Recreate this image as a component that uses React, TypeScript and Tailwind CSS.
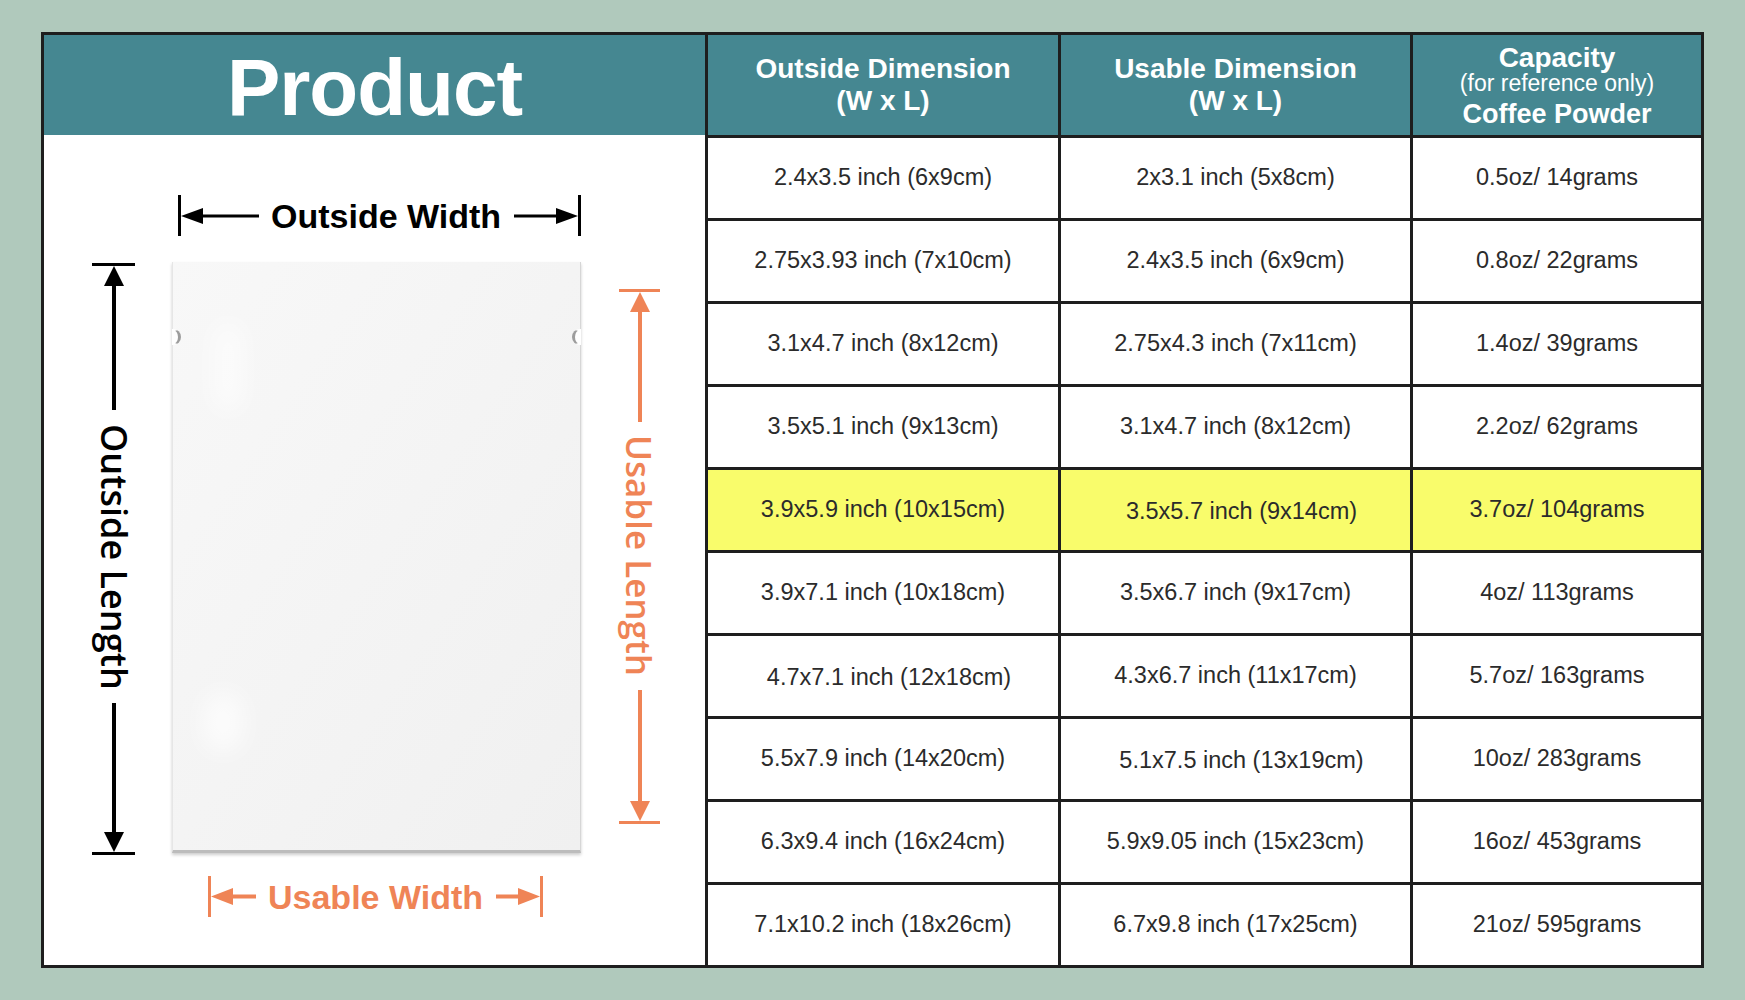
import React from 'react';

const ORANGE = '#ef8456';

type Row = { outside: string; usable: string; capacity: string; hl?: boolean; shift?: string };

const rows: Row[] = [
  { outside: '2.4x3.5 inch (6x9cm)', usable: '2x3.1 inch (5x8cm)', capacity: '0.5oz/ 14grams' },
  { outside: '2.75x3.93 inch (7x10cm)', usable: '2.4x3.5 inch (6x9cm)', capacity: '0.8oz/ 22grams' },
  { outside: '3.1x4.7 inch (8x12cm)', usable: '2.75x4.3 inch (7x11cm)', capacity: '1.4oz/ 39grams' },
  { outside: '3.5x5.1 inch (9x13cm)', usable: '3.1x4.7 inch (8x12cm)', capacity: '2.2oz/ 62grams' },
  { outside: '3.9x5.9 inch (10x15cm)', usable: '3.5x5.7 inch (9x14cm)', capacity: '3.7oz/ 104grams', hl: true, shift: 'usable' },
  { outside: '3.9x7.1 inch (10x18cm)', usable: '3.5x6.7 inch (9x17cm)', capacity: '4oz/ 113grams' },
  { outside: '4.7x7.1 inch (12x18cm)', usable: '4.3x6.7 inch (11x17cm)', capacity: '5.7oz/ 163grams', shift: 'outside' },
  { outside: '5.5x7.9 inch (14x20cm)', usable: '5.1x7.5 inch (13x19cm)', capacity: '10oz/ 283grams', shift: 'usable' },
  { outside: '6.3x9.4 inch (16x24cm)', usable: '5.9x9.05 inch (15x23cm)', capacity: '16oz/ 453grams' },
  { outside: '7.1x10.2 inch (18x26cm)', usable: '6.7x9.8 inch (17x25cm)', capacity: '21oz/ 595grams' },
];

// horizontal arrow, head on one end
function HArrow({ len, dir, color, thick = 3, head = 22, hh = 16 }: { len: number; dir: 'left' | 'right'; color: string; thick?: number; head?: number; hh?: number }) {
  const y = (hh - thick) / 2;
  return (
    <svg width={len} height={hh} className="shrink-0 block">
      {dir === 'left' ? (
        <>
          <polygon points={`0,${hh / 2} ${head},0 ${head},${hh}`} fill={color} />
          <rect x={head - 1} y={y} width={len - head + 1} height={thick} fill={color} />
        </>
      ) : (
        <>
          <rect x={0} y={y} width={len - head + 1} height={thick} fill={color} />
          <polygon points={`${len},${hh / 2} ${len - head},0 ${len - head},${hh}`} fill={color} />
        </>
      )}
    </svg>
  );
}

function VArrow({ len, dir, color, thick = 4, head = 20, hw = 20 }: { len: number; dir: 'up' | 'down'; color: string; thick?: number; head?: number; hw?: number }) {
  const x = (hw - thick) / 2;
  return (
    <svg width={hw} height={len} className="shrink-0 block">
      {dir === 'up' ? (
        <>
          <polygon points={`${hw / 2},0 0,${head} ${hw},${head}`} fill={color} />
          <rect x={x} y={head - 1} width={thick} height={len - head + 1} fill={color} />
        </>
      ) : (
        <>
          <rect x={x} y={0} width={thick} height={len - head + 1} fill={color} />
          <polygon points={`${hw / 2},${len} 0,${len - head} ${hw},${len - head}`} fill={color} />
        </>
      )}
    </svg>
  );
}

function Cell({ text, hl, shifted }: { text: string; hl?: boolean; shifted?: boolean }) {
  return (
    <div
      className={`flex items-center justify-center text-[23.5px] text-[#2b2b2b] ${hl ? 'bg-[#f9fc6b]' : 'bg-white'} ${shifted ? 'pl-[12px] pt-[3px]' : ''}`}
    >
      {text}
    </div>
  );
}

function ProductPanel() {
  return (
    <div className="row-span-11 flex flex-col bg-white">
      <div className="flex h-[100px] items-center justify-center bg-[#458791]">
        <span className="mt-[6px] text-[80px] font-bold leading-none tracking-[-1px] text-white">Product</span>
      </div>

      <div className="flex flex-1 flex-col pt-[60px]">
        {/* outside width */}
        <div className="flex h-[41px] items-center pl-[134px]">
          <div className="h-[41px] w-[3px] bg-black" />
          <HArrow len={78} dir="left" color="#000" />
          <span className="ml-[12px] text-[34px] font-bold leading-none text-black">Outside Width</span>
          <div className="ml-[13px]">
            <HArrow len={64} dir="right" color="#000" />
          </div>
          <div className="h-[41px] w-[3px] bg-black" />
        </div>

        <div className="mt-[26px] flex items-start pl-[48px]">
          {/* outside length */}
          <div className="mt-[1px] flex h-[592px] w-[43px] flex-col items-center">
            <div className="h-[3px] w-[43px] bg-black" />
            <VArrow len={144} dir="up" color="#000" />
            <div className="flex flex-1 items-center justify-center">
              <span className="font-['Open_Sans',sans-serif] text-[36px] font-semibold leading-none text-black [writing-mode:vertical-rl]">
                Outside Length
              </span>
            </div>
            <VArrow len={149} dir="down" color="#000" />
            <div className="h-[3px] w-[43px] bg-black" />
          </div>

          {/* the bag */}
          <div className="relative ml-[37px] h-[591px] w-[409px] border-r border-b-[3px] border-l border-r-[#d6d6d6] border-b-[#bcbcbc] border-l-[#e6e6e6] bg-gradient-to-br from-[#f8f8f8] via-[#f4f4f4] to-[#f0f0f0] shadow-[0_2px_3px_rgba(0,0,0,0.2)]">
            <span className="absolute top-[67px] left-[-1px] h-[16px] w-[9px] rounded-r-full border-y border-r-[3px] border-[#9d9d9d] border-y-transparent bg-white" />
            <span className="absolute top-[67px] right-[-1px] h-[16px] w-[9px] rounded-l-full border-y border-l-[3px] border-[#9d9d9d] border-y-transparent bg-white" />
            <span className="absolute top-[60px] left-[40px] h-[90px] w-[30px] rounded-full bg-white/60 blur-md" />
            <span className="absolute top-[430px] left-[30px] h-[60px] w-[40px] rounded-full bg-white/70 blur-md" />
          </div>

          {/* usable length */}
          <div className="mt-[27px] ml-[38px] flex h-[535px] w-[41px] flex-col items-center">
            <div className="h-[3px] w-[41px] bg-[#ef8456]" />
            <VArrow len={130} dir="up" color={ORANGE} />
            <div className="flex flex-1 items-center justify-center">
              <span className="font-['Open_Sans',sans-serif] text-[35px] font-semibold leading-none text-[#ef8456] [writing-mode:vertical-rl]">
                Usable Length
              </span>
            </div>
            <VArrow len={131} dir="down" color={ORANGE} />
            <div className="h-[3px] w-[41px] bg-[#ef8456]" />
          </div>
        </div>

        {/* usable width */}
        <div className="mt-[21px] flex h-[41px] items-center pl-[164px]">
          <div className="h-[41px] w-[3px] bg-[#ef8456]" />
          <HArrow len={45} dir="left" color={ORANGE} thick={4} hh={17} />
          <span className="ml-[12px] text-[34px] font-bold leading-none text-[#ef8456]">Usable Width</span>
          <div className="ml-[13px]">
            <HArrow len={44} dir="right" color={ORANGE} thick={4} hh={17} />
          </div>
          <div className="h-[41px] w-[3px] bg-[#ef8456]" />
        </div>
      </div>
    </div>
  );
}

export default function App() {
  return (
    <div className="h-[1000px] w-full bg-[#b0c9bc] pt-[32px] pl-[41px] font-['Liberation_Sans',Arial,sans-serif]">
      <div className="grid h-[936px] w-[1663px] grid-cols-[661px_350px_349px_288px] grid-rows-[100px_repeat(10,minmax(0,1fr))] gap-[3px] bg-[#1e1e1e] p-[3px]">
        <ProductPanel />

        <div className="flex flex-col items-center justify-center bg-[#458791] text-[28px] font-bold leading-[32px] text-white">
          <span>Outside Dimension</span>
          <span>(W x L)</span>
        </div>
        <div className="flex flex-col items-center justify-center bg-[#458791] text-[28px] font-bold leading-[32px] text-white">
          <span>Usable Dimension</span>
          <span>(W x L)</span>
        </div>
        <div className="flex flex-col items-center bg-[#458791] pt-[10px] text-white">
          <span className="text-[28px] font-bold leading-[26px]">Capacity</span>
          <span className="text-[23px] leading-[24px]">(for reference only)</span>
          <span className="mt-[4px] text-[27px] font-bold leading-[30px]">Coffee Powder</span>
        </div>

        {rows.map((r) => (
          <React.Fragment key={r.outside + r.usable}>
            <Cell text={r.outside} hl={r.hl} shifted={r.shift === 'outside'} />
            <Cell text={r.usable} hl={r.hl} shifted={r.shift === 'usable'} />
            <Cell text={r.capacity} hl={r.hl} />
          </React.Fragment>
        ))}
      </div>
    </div>
  );
}
